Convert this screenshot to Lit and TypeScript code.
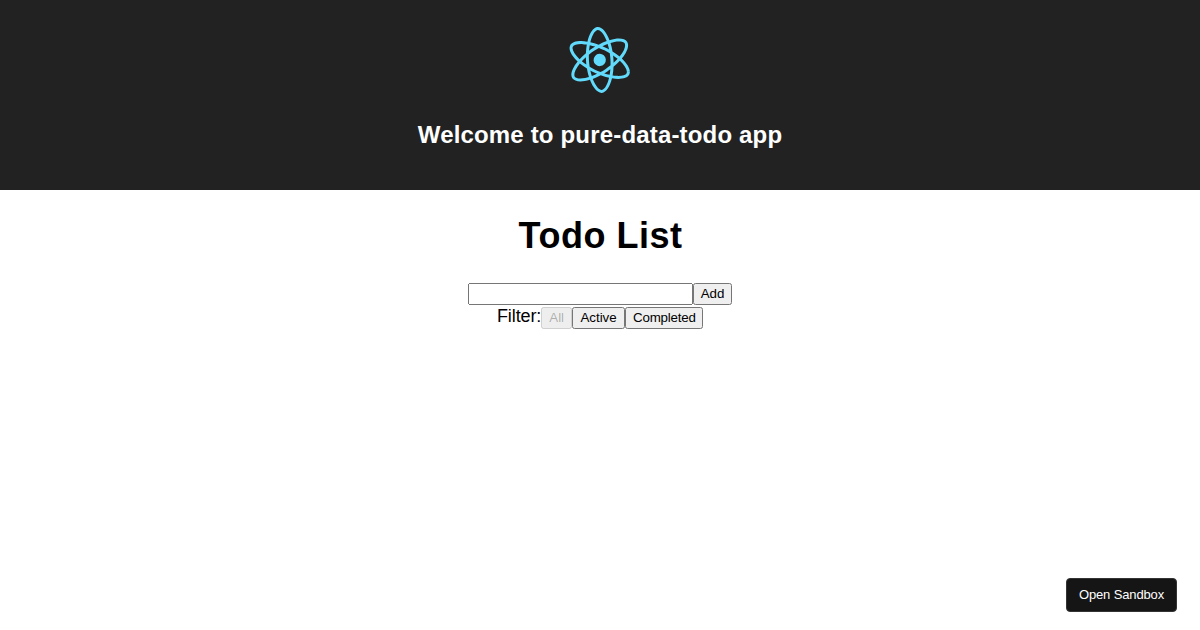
import { LitElement, html, css } from 'lit'
import { customElement, state } from 'lit/decorators.js'

@customElement('app-root')
export class AppRoot extends LitElement {
  static styles = [
    css`
      :host {
        display: block;
        height: 630px;
        overflow: hidden;
        background: #fff;
        color: #000;
        font-family: 'Liberation Sans', Arial, sans-serif;
        font-size: 18px;
        text-align: center;
      }

      .header {
        box-sizing: border-box;
        height: 190px;
        padding: 20px;
        background: #222;
        color: #fff;
      }

      .logo {
        display: block;
        height: 80px;
        margin: 0 auto;
        transform: rotate(86.3deg);
      }

      .welcome {
        margin: 21px 0 0;
        font-size: 24px;
        line-height: 28px;
        letter-spacing: 0.17px;
      }

      .title {
        margin: 24px 0 25px;
        font-size: 36px;
        line-height: 44px;
        letter-spacing: 0.5px;
        text-indent: 1px;
      }

      .row {
        display: flex;
        justify-content: center;
        height: 24px;
      }

      .row input {
        box-sizing: border-box;
        width: 225px;
        height: 22px;
        margin: 0;
      }

      .row button {
        box-sizing: border-box;
        height: 22px;
        margin: 0;
        padding: 0 6px 1px;
        font-family: inherit;
        font-size: 13.333px;
      }

      .row .active {
        width: 53px;
      }

      .row .completed {
        width: 78px;
        letter-spacing: -0.2px;
      }

      .label {
        line-height: 19px;
        letter-spacing: -0.1px;
      }

      .open {
        position: fixed;
        right: 23px;
        bottom: 18px;
        box-sizing: border-box;
        width: 111px;
        height: 34px;
        padding: 0 0 2px;
        border: 1px solid #343434;
        border-radius: 4px;
        background: #151515;
        color: #fff;
        font-family: inherit;
        font-size: 13px;
        letter-spacing: -0.13px;
      }
    `,
  ]

  @state() filter = 'All'

  render() {
    return html`
      <header class="header">
        <svg class="logo" viewBox="0 0 841.9 595.3">
          <g fill="#61dafb">
            <path
              d="M666.3 296.5c0-32.5-40.7-63.3-103.1-82.4 14.4-63.6 8-114.2-20.2-130.4-6.5-3.8-14.1-5.6-22.4-5.6v22.3c4.6 0 8.3.9 11.4 2.6 13.6 7.8 19.5 37.5 14.9 75.7-1.1 9.4-2.9 19.3-5.1 29.4-19.6-4.8-41-8.5-63.5-10.9-13.5-18.5-27.5-35.3-41.6-50 32.6-30.3 63.2-46.9 84-46.9V78c-27.5 0-63.5 19.6-99.9 53.6-36.4-33.8-72.4-53.2-99.9-53.2v22.3c20.7 0 51.4 16.5 84 46.6-14 14.7-28 31.4-41.3 49.9-22.6 2.4-44 6.1-63.6 11-2.3-10-4-19.7-5.2-29-4.7-38.2 1.1-67.9 14.6-75.8 3-1.8 6.9-2.6 11.5-2.6V78.5c-8.4 0-16 1.8-22.6 5.6-28.1 16.2-34.4 66.7-19.9 130.1-62.2 19.2-102.7 49.9-102.7 82.3 0 32.5 40.7 63.3 103.1 82.4-14.4 63.6-8 114.2 20.2 130.4 6.5 3.8 14.1 5.6 22.5 5.6 27.5 0 63.5-19.6 99.9-53.6 36.4 33.8 72.4 53.2 99.9 53.2 8.4 0 16-1.8 22.6-5.6 28.1-16.2 34.4-66.7 19.9-130.1 62-19.1 102.5-49.9 102.5-82.3zm-130.2-66.7c-3.7 12.9-8.3 26.2-13.5 39.5-4.1-8-8.4-16-13.1-24-4.6-8-9.5-15.8-14.4-23.4 14.2 2.1 27.9 4.7 41 7.9zm-45.8 106.5c-7.8 13.5-15.8 26.3-24.1 38.2-14.9 1.3-30 2-45.2 2-15.1 0-30.2-.7-45-1.9-8.3-11.9-16.4-24.6-24.2-38-7.6-13.1-14.5-26.4-20.8-39.8 6.2-13.4 13.2-26.8 20.7-39.9 7.8-13.5 15.8-26.3 24.1-38.2 14.9-1.3 30-2 45.2-2 15.1 0 30.2.7 45 1.9 8.3 11.9 16.4 24.6 24.2 38 7.6 13.1 14.5 26.4 20.8 39.8-6.3 13.4-13.2 26.8-20.7 39.9zm32.3-13c5.4 13.4 10 26.8 13.8 39.8-13.1 3.2-26.9 5.9-41.2 8 4.9-7.7 9.8-15.6 14.4-23.7 4.6-8 8.9-16.1 13-24.1zM421.2 430c-9.3-9.6-18.6-20.3-27.8-32 9 .4 18.2.7 27.5.7 9.4 0 18.7-.2 27.8-.7-9 11.7-18.3 22.4-27.5 32zm-74.4-58.9c-14.2-2.1-27.9-4.7-41-7.9 3.7-12.9 8.3-26.2 13.5-39.5 4.1 8 8.4 16 13.1 24 4.7 8 9.5 15.8 14.4 23.4zM420.7 163c9.3 9.6 18.6 20.3 27.8 32-9-.4-18.2-.7-27.5-.7-9.4 0-18.7.2-27.8.7 9-11.7 18.3-22.4 27.5-32zm-74 58.9c-4.9 7.7-9.8 15.6-14.4 23.7-4.6 8-8.9 16-13 24-5.4-13.4-10-26.8-13.8-39.8 13.1-3.1 26.9-5.8 41.2-7.9zm-90.5 125.2c-35.4-15.1-58.3-34.9-58.3-50.6 0-15.7 22.9-35.6 58.3-50.6 8.6-3.7 18-7 27.7-10.1 5.7 19.6 13.2 40 22.5 60.9-9.2 20.8-16.6 41.1-22.2 60.6-9.9-3.1-19.3-6.5-28-10.2zM310 490c-13.6-7.8-19.5-37.5-14.9-75.7 1.1-9.4 2.9-19.3 5.1-29.4 19.6 4.8 41 8.5 63.5 10.9 13.5 18.5 27.5 35.3 41.6 50-32.6 30.3-63.2 46.9-84 46.9-4.5-.1-8.3-1-11.3-2.7zm237.2-76.2c4.7 38.2-1.1 67.9-14.6 75.8-3 1.8-6.9 2.6-11.5 2.6-20.7 0-51.4-16.5-84-46.6 14-14.7 28-31.4 41.3-49.9 22.6-2.4 44-6.1 63.6-11 2.3 10.1 4.1 19.8 5.2 29.1zm38.5-66.7c-8.6 3.7-18 7-27.7 10.1-5.7-19.6-13.2-40-22.5-60.9 9.2-20.8 16.6-41.1 22.2-60.6 9.9 3.1 19.3 6.5 28.1 10.2 35.4 15.1 58.3 34.9 58.3 50.6-.1 15.7-23 35.6-58.4 50.6z"
            />
            <circle cx="420.9" cy="296.5" r="45.7" />
          </g>
        </svg>
        <h2 class="welcome">Welcome to pure-data-todo app</h2>
      </header>
      <h1 class="title">Todo List</h1>
      <div class="row"><input type="text" /><button>Add</button></div>
      <div class="row">
        <span class="label">Filter:</span>
        ${['All', 'Active', 'Completed'].map(
          (name) => html`
            <button
              class=${name.toLowerCase()}
              ?disabled=${this.filter === name}
              @click=${() => (this.filter = name)}
            >
              ${name}
            </button>
          `
        )}
      </div>
      <button class="open">Open Sandbox</button>
    `
  }
}
